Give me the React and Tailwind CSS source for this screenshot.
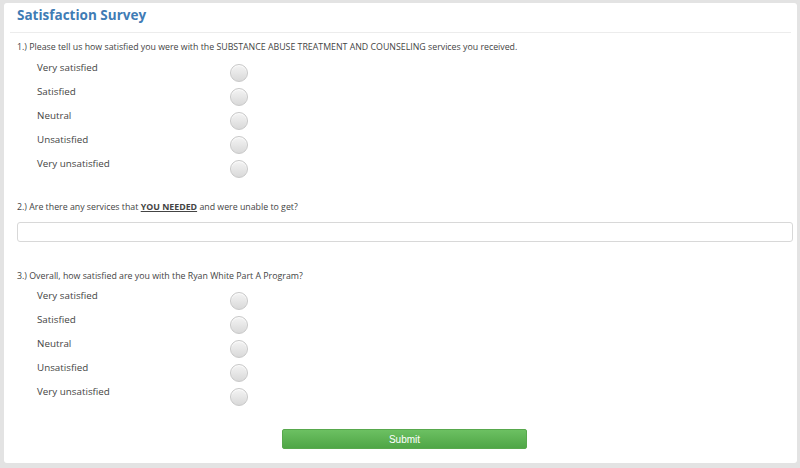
const options = ['Very satisfied', 'Satisfied', 'Neutral', 'Unsatisfied', 'Very unsatisfied'];

function Radio() {
  return (
    <span className="mt-[3px] block h-[18px] w-[18px] shrink-0 rounded-full border border-[#c8c8c8] bg-gradient-to-b from-[#f4f4f4] to-[#d9d9d9] shadow-[inset_0_1px_1px_rgba(255,255,255,0.9)]" />
  );
}

function Options() {
  return (
    <div className="flex flex-col">
      {options.map((o) => (
        <div key={o} className="flex h-[24px] items-start">
          <span className="w-[226px] shrink-0 pl-[33px] text-[9.8px] leading-[14px] text-[#444]">{o}</span>
          <Radio />
        </div>
      ))}
    </div>
  );
}

export default function App() {
  return (
    <div className="h-[468px] w-[800px] bg-[#e3e3e3] pb-[5px] pl-[4px] pr-[3px] pt-[3px] font-['Open_Sans',sans-serif]">
      <div className="flex h-full flex-col rounded-[3px] bg-white">
        <div className="mx-[6px] border-b border-[#ececec] pb-[8px] pl-[7px] pt-[3px]">
          <h1 className="text-[13.5px] font-bold leading-[18px] text-[#3f7cb5]">Satisfaction Survey</h1>
        </div>

        <p className="mt-[7px] pl-[13px] text-[8.8px] leading-[14px] text-[#444]">
          1.) Please tell us how satisfied you were with the SUBSTANCE ABUSE TREATMENT AND COUNSELING services you received.
        </p>
        <div className="mt-[7px]">
          <Options />
        </div>

        <p className="mt-[19px] pl-[13px] text-[8.8px] leading-[14px] text-[#444]">
          2.) Are there any services that{' '}
          <span className="font-bold underline">YOU NEEDED</span> and were unable to get?
        </p>
        <div className="mt-[8px] pl-[13px] pr-[4px]">
          <input className="block h-[20px] w-full rounded-[3px] border border-[#d8d8d8] bg-white" />
        </div>

        <p className="mt-[27px] pl-[13px] text-[8.8px] leading-[14px] text-[#444]">
          3.) Overall, how satisfied are you with the Ryan White Part A Program?
        </p>
        <div className="mt-[6px]">
          <Options />
        </div>

        <div className="mt-[20px] flex pl-[278px]">
          <button className="h-[20px] w-[245px] rounded-[2px] border border-[#58a84d] bg-gradient-to-b from-[#6cc062] to-[#4fa646] font-['Liberation_Sans',sans-serif] text-[10px] text-white">
            Submit
          </button>
        </div>
      </div>
    </div>
  );
}
